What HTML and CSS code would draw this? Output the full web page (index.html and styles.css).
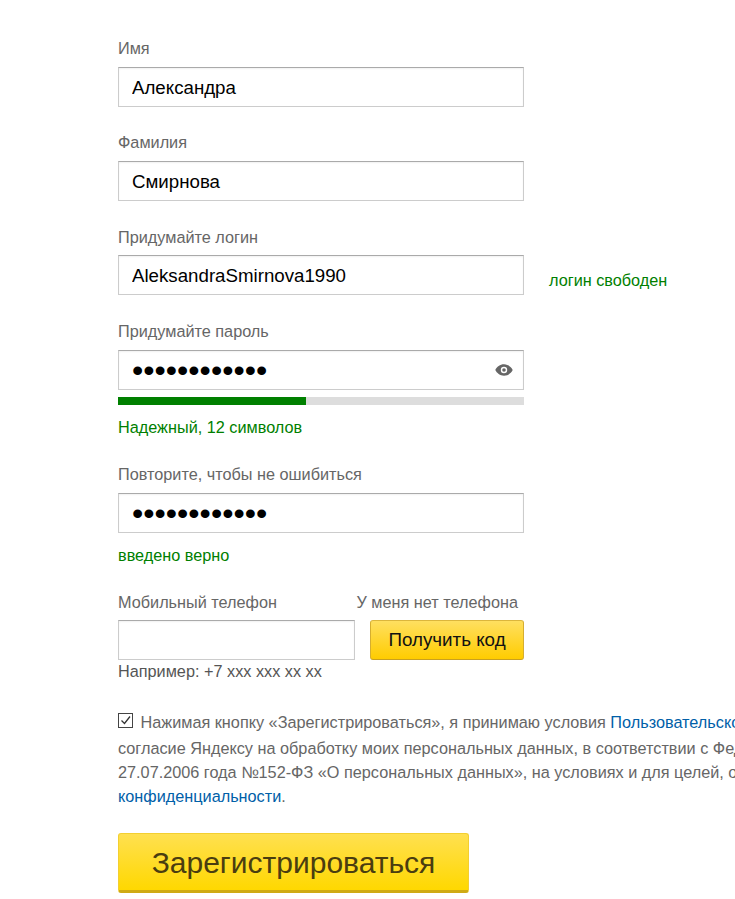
FILE: index.html
```html
<!DOCTYPE html>
<html lang="ru">
<head>
    <meta charset="UTF-8">
    <meta name="viewport" content="width=device-width, initial-scale=1.0">
    <title>Регистрация</title>
    <link rel="stylesheet" href="styles.css">
</head>
<body>
    <form class="form">
        <div class="field">
            <label class="label" for="firstname">Имя</label>
            <input class="input" type="text" id="firstname" value="Александра">
        </div>
        <div class="field">
            <label class="label" for="lastname">Фамилия</label>
            <input class="input" type="text" id="lastname" value="Смирнова">
        </div>
        <div class="field field-login">
            <label class="label" for="login">Придумайте логин</label>
            <div class="with-note">
                <input class="input" type="text" id="login" value="AleksandraSmirnova1990">
                <span class="note">логин свободен</span>
            </div>
        </div>
        <div class="field field-password">
            <label class="label" for="password">Придумайте пароль</label>
            <div class="password-box">
                <input class="input input-secret" type="password" id="password" value="qwertyuiop12">
                <svg class="eye" width="18" height="12" viewBox="0 0 18 12">
                    <path fill="#666" fill-rule="evenodd" d="M9 .3C5 .3 1.800 3 .3 6 1.800 9 5 11.700 9 11.700S16.200 9 17.700 6C16.200 3 13 .3 9 .3zM9 2.800a3.200 3.200 0 1 1 0 6.400 3.200 3.200 0 0 1 0-6.400z"/>
                    <circle fill="#666" cx="9" cy="6" r="1.800"/>
                </svg>
            </div>
            <div class="strength"><div class="strength-fill"></div></div>
            <div class="hint">Надежный, 12 символов</div>
        </div>
        <div class="field field-repeat">
            <label class="label" for="repeat">Повторите, чтобы не ошибиться</label>
            <input class="input input-secret" type="password" id="repeat" value="qwertyuiop12">
            <div class="hint">введено верно</div>
        </div>
        <div class="phone">
            <div class="phone-labels">
                <label class="label" for="phone">Мобильный телефон</label>
                <span class="no-phone">У меня нет телефона</span>
            </div>
            <div class="phone-row">
                <input class="input input-phone" type="text" id="phone">
                <button class="btn btn-code" type="button">Получить код</button>
            </div>
            <div class="example">Например: +7 xxx xxx xx xx</div>
        </div>
        <div class="terms">
            <span class="check">
                <svg class="check-box" width="16" height="16" viewBox="0 0 16 16">
                    <rect x=".5" y=".5" width="14" height="14" fill="#fff" stroke="#444"/>
                    <path fill="none" stroke="#333" stroke-width="1.300" d="M3.500 7.500l3 3 5.500-7"/>
                </svg>
            </span>
            Нажимая кнопку «Зарегистрироваться», я принимаю условия <a href="#">Пользовательского соглашения</a><br>
            согласие Яндексу на обработку моих персональных данных, в соответствии с Федеральным законом от<br>
            27.07.2006 года №152-ФЗ «О персональных данных», на условиях и для целей, определенных в Политике<br>
            <a href="#">конфиденциальности</a>.
        </div>
        <button class="btn btn-submit" type="button">Зарегистрироваться</button>
    </form>
</body>
</html>
```

FILE: styles.css
```css
html, body {
    margin: 0;
    height: 899px;
    overflow: hidden;
    background: #fff;
}
body {
    font-family: "Liberation Sans", Arial, sans-serif;
    font-size: 16.25px;
    color: #666;
}
.form {
    padding: 39px 0 0 118px;
    width: 406px;
}
.field {
    height: 94px;
}
.field-login {
    height: 95px;
}
.field-login .label {
    padding-top: 1px;
    margin-bottom: 9px;
}
.field-password {
    height: 143px;
}
.field-repeat {
    height: 128px;
}
.label {
    display: block;
    height: 18px;
    line-height: 18px;
    margin-bottom: 10px;
    color: #666;
}
.input {
    display: block;
    box-sizing: border-box;
    width: 406px;
    height: 40px;
    padding: 2px 13px 0;
    border: 1px solid #ccc;
    border-top-color: #aaa;
    box-shadow: inset 0 1px 2px rgba(0,0,0,0.06);
    font-family: inherit;
    font-size: 18.7px;
    color: #000;
    outline: none;
}
.input-secret {
    padding-top: 0;
    font-size: 32.2px;
}
.with-note {
    display: flex;
    width: 600px;
}
.note {
    margin: 16px 0 0 25px;
    color: #007f00;
    white-space: nowrap;
}
.password-box {
    position: relative;
}
.eye {
    position: absolute;
    right: 11px;
    top: 14px;
}
.strength {
    height: 8px;
    margin-top: 7px;
    background: #ddd;
}
.strength-fill {
    height: 8px;
    width: 188px;
    background: #008000;
}
.hint {
    margin-top: 13px;
    line-height: 18px;
    color: #007f00;
}
.phone-labels {
    display: flex;
    justify-content: space-between;
    width: 400px;
    height: 18px;
    margin-bottom: 9px;
    line-height: 18px;
}
.phone-labels .label {
    margin: 0;
}
.phone-row {
    display: flex;
    justify-content: space-between;
}
.input-phone {
    width: 237px;
}
.btn {
    box-sizing: border-box;
    border: 1px solid #e0b020;
    border-radius: 3px;
    font-family: inherit;
    color: #111;
    padding: 0;
    cursor: pointer;
}
.btn-code {
    width: 154px;
    height: 40px;
    font-size: 18.8px;
    background: linear-gradient(#ffdf60, #ffcc00);
    border-color: #dcb63c #d6ae30 #c9a020;
}
.example {
    margin-top: 2px;
    line-height: 18px;
    color: #555;
}
.terms {
    width: 760px;
    margin-top: 30px;
    line-height: 24px;
    white-space: nowrap;
    color: #666;
}
.terms a {
    color: #0060a8;
    text-decoration: none;
}
.check {
    display: inline-block;
    width: 18px;
    height: 16px;
    margin-bottom: 7px;
    vertical-align: -8px;
}
.check-box {
    display: block;
}
.btn-submit {
    display: block;
    width: 351px;
    height: 60px;
    margin-top: 24.5px;
    padding-top: 2px;
    font-size: 30px;
    color: #4a3d10;
    background: linear-gradient(#ffe050, #ffd800);
    border-color: #f3cf30;
    border-bottom: 3px solid #cfaa14;
}
```
